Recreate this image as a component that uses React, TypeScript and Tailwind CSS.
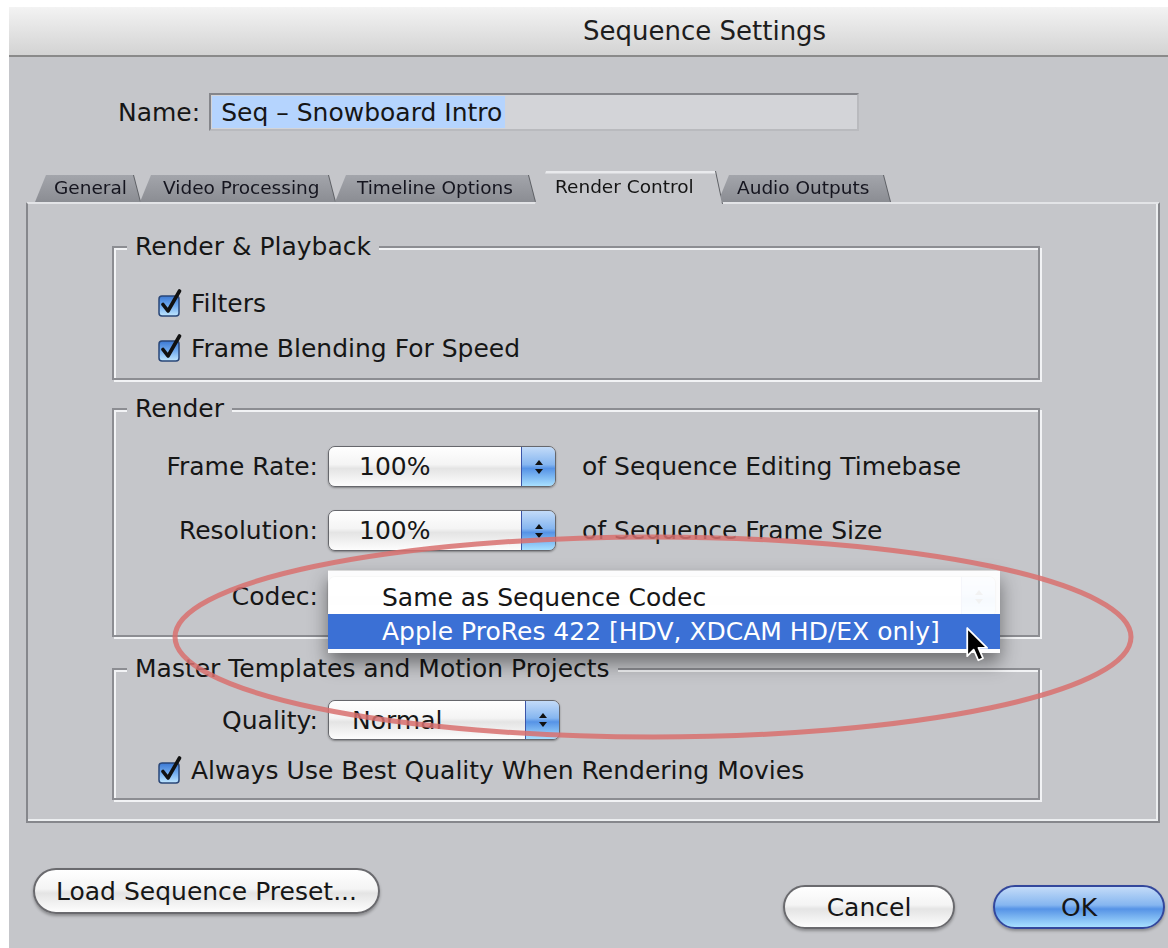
import clsx from 'clsx';
import type { ReactNode } from 'react';

const glossWhite =
  'bg-[linear-gradient(to_bottom,#ffffff_0%,#f4f4f4_45%,#e4e4e4_55%,#fdfdfd_100%)]';
const glossBlue =
  'bg-[linear-gradient(to_bottom,#c3dbf8_0%,#86b6f0_45%,#5693e6_55%,#a8e0ff_100%)]';

function CheckBox() {
  return (
    <svg width="26" height="28" viewBox="0 0 26 28" className="shrink-0">
      <defs>
        <linearGradient id="aquaCheck" x1="0" y1="0" x2="0" y2="1">
          <stop offset="0" stopColor="#3b78d3" />
          <stop offset="0.5" stopColor="#72acef" />
          <stop offset="1" stopColor="#c2e8ff" />
        </linearGradient>
      </defs>
      <rect x="1" y="7" width="20" height="20" rx="3" fill="url(#aquaCheck)" stroke="#2a4778" strokeWidth="1.5" />
      <path d="M5 15.5 L10 22 L21.5 2" fill="none" stroke="#111" strokeWidth="3.6" strokeLinecap="round" strokeLinejoin="round" />
    </svg>
  );
}

function CheckRow({ label, className }: { label: string; className?: string }) {
  return (
    <div className={clsx('flex h-[40px] items-center', className)}>
      <CheckBox />
      <span className="ml-[7px] text-[25px] leading-none">{label}</span>
    </div>
  );
}

function Arrows() {
  return (
    <svg width="10" height="20" viewBox="0 0 10 20">
      <path d="M5 3 L9 8 L1 8 Z" fill="#111" />
      <path d="M5 17 L9 12 L1 12 Z" fill="#111" />
    </svg>
  );
}

function Popup({
  value,
  className,
  pad = 'pl-[30px]',
}: {
  value?: string;
  className: string;
  pad?: string;
}) {
  return (
    <div
      className={clsx(
        'flex overflow-hidden rounded-[7px] border border-[#66676c] shadow-[0_1px_2px_rgba(0,0,0,0.35)]',
        className,
      )}
    >
      <div className={clsx('flex flex-1 items-center text-[25px] leading-none', glossWhite, pad)}>{value}</div>
      <div
        className={clsx(
          'flex w-[34px] items-center justify-center border-l border-[#3b55a8]',
          glossBlue,
        )}
      >
        <Arrows />
      </div>
    </div>
  );
}

function Group({
  title,
  className,
  children,
}: {
  title: string;
  className?: string;
  children: ReactNode;
}) {
  return (
    <div
      className={clsx(
        'relative w-[928px] border-2 border-[#8c8d92] shadow-[2px_2px_0_#f2f3f5,inset_2px_2px_0_#f2f3f5]',
        className,
      )}
    >
      <span className="absolute -top-[16px] left-[13px] bg-[#c5c6ca] px-[8px] text-[25px] leading-[30px]">
        {title}
      </span>
      {children}
    </div>
  );
}

function Tab({
  label,
  className,
  active = false,
}: {
  label: string;
  className: string;
  active?: boolean;
}) {
  return (
    <div
      className={clsx(
        'flex shrink-0 items-center text-[18.5px] leading-none [clip-path:polygon(11px_0,calc(100%_-_7px)_0,100%_100%,0_100%)]',
        active
          ? 'relative z-10 -mb-[2px] h-[33px] bg-[linear-gradient(to_bottom,#e9eaed_0,#e9eaed_2px,#c5c6ca_3px)] text-[#141414]'
          : 'h-[27px] bg-gradient-to-b from-[#a3a5ab] to-[#8b8d93] text-[#15151f]',
        className,
      )}
    >
      {label}
    </div>
  );
}

function AquaButton({
  children,
  className,
  blue = false,
}: {
  children: ReactNode;
  className: string;
  blue?: boolean;
}) {
  return (
    <div
      className={clsx(
        'flex shrink-0 items-center justify-center rounded-full border-2 text-[25px] leading-none shadow-[0_2px_3px_rgba(0,0,0,0.3)]',
        blue ? clsx('border-[#33479c]', glossBlue) : clsx('border-[#6a6a6e]', glossWhite),
        className,
      )}
    >
      {children}
    </div>
  );
}

export default function App() {
  return (
    <div className="relative h-[948px] w-[1168px] overflow-hidden bg-white font-['DejaVu_Sans',sans-serif] text-[#161616]">
      <div className="ml-[9px] mt-[7px] flex h-[941px] flex-col bg-[#c5c6ca]">
        {/* title bar */}
        <div className="flex h-[50px] shrink-0 items-center border-b-2 border-[#8a8a8a] bg-gradient-to-b from-[#f3f3f3] to-[#d3d3d3] pl-[574px] text-[26px] leading-none text-[#1d1d1d]">
          Sequence Settings
        </div>

        {/* sequence name */}
        <div className="mt-[36px] flex items-center">
          <span className="ml-[109px] text-[25px] leading-none">Name:</span>
          <div className="ml-[9px] flex h-[38px] w-[650px] items-center border-2 border-[#85868b] border-b-[#b9babe] border-r-[#b9babe] bg-[#d3d4d8] px-[1px]">
            <span className="flex h-[32px] items-center bg-[#b5d4fe] pl-[9px] pr-[3px] text-[25px] leading-none">
              Seq – Snowboard Intro
            </span>
          </div>
        </div>

        {/* tabs */}
        <div className="mt-[39px] flex h-[32px] items-end pl-[26px] [filter:drop-shadow(1px_0_0_#5e6065)]">
          <Tab label="General" className="w-[105px] pl-[19px]" />
          <Tab label="Video Processing" className="w-[195px] pl-[23px]" />
          <Tab label="Timeline Options" className="w-[200px] pl-[22px]" />
          <Tab label="Render Control" active className="w-[187px] pl-[20px]" />
          <Tab label="Audio Outputs" className="-ml-[4px] w-[172px] pl-[19px]" />
        </div>

        {/* tab panel */}
        <div className="ml-[17px] h-[621px] w-[1134px] border-2 border-[#86878c] border-t-[#e3e4e7] pl-[84px] pt-[42px] shadow-[inset_-2px_-2px_0_#eceef0]">
          <Group title="Render & Playback" className="h-[134px] pl-[44px] pt-[35px]">
            <CheckRow label="Filters" />
            <CheckRow label="Frame Blending For Speed" className="mt-[5px]" />
          </Group>

          <Group title="Render" className="mt-[28px] h-[229px] pt-[36px]">
            <div className="flex h-[41px] items-center">
              <span className="w-[204px] text-right text-[25px] leading-none">Frame Rate:</span>
              <Popup value="100%" className="ml-[10px] h-[41px] w-[228px]" />
              <span className="ml-[26px] text-[25px] leading-none">of Sequence Editing Timebase</span>
            </div>
            <div className="mt-[23px] flex h-[41px] items-center">
              <span className="w-[204px] text-right text-[25px] leading-none">Resolution:</span>
              <Popup value="100%" className="ml-[10px] h-[41px] w-[228px]" />
              <span className="ml-[26px] text-[25px] leading-none">of Sequence Frame Size</span>
            </div>
            <div className="mt-[25px] flex h-[41px] items-center">
              <span className="w-[204px] text-right text-[25px] leading-none">Codec:</span>
              {/* popup sits closed under the open menu */}
              <Popup className="ml-[10px] h-[41px] w-[668px]" />
            </div>
          </Group>

          <Group title="Master Templates and Motion Projects" className="mt-[31px] h-[132px] pt-[30px]">
            <div className="flex h-[40px] items-center">
              <span className="w-[204px] text-right text-[25px] leading-none">Quality:</span>
              <Popup value="Normal" pad="pl-[23px]" className="ml-[10px] h-[40px] w-[232px]" />
            </div>
            <CheckRow label="Always Use Best Quality When Rendering Movies" className="mt-[10px] pl-[44px]" />
          </Group>
        </div>

        {/* dialog buttons */}
        <div className="mt-[45px] flex items-start">
          <AquaButton className="ml-[24px] h-[46px] w-[347px]">Load Sequence Preset...</AquaButton>
          <AquaButton className="ml-[403px] mt-[17px] h-[44px] w-[172px]">Cancel</AquaButton>
          <AquaButton blue className="ml-[38px] mt-[17px] h-[44px] w-[172px]">
            OK
          </AquaButton>
        </div>
      </div>

      {/* open codec menu */}
      <div className="absolute left-[328px] top-[570px] w-[672px] border-t border-[#d9d9d9] bg-white/95 pb-[4px] pt-[10px] text-[25px] leading-none shadow-[0_10px_18px_rgba(0,0,0,0.45)]">
        <div className="flex h-[33px] items-center pl-[54px]">Same as Sequence Codec</div>
        <div className="flex h-[35px] items-center bg-[#3b70d5] pl-[54px] text-white">
          Apple ProRes 422 [HDV, XDCAM HD/EX only]
        </div>
      </div>

      {/* pointer */}
      <svg className="absolute left-[965px] top-[626px]" width="25" height="37" viewBox="0 0 18 27">
        <path
          d="M1.5 1.5 L1.5 22 L6.2 17.3 L9.6 25 L13 23.5 L9.7 16 L16 16 Z"
          fill="#000"
          stroke="#fff"
          strokeWidth="1.3"
          strokeLinejoin="round"
        />
      </svg>

      {/* red ring drawn around the codec choice */}
      <svg className="pointer-events-none absolute left-0 top-0" width="1168" height="948">
        <ellipse cx="653" cy="637" rx="478" ry="100" fill="none" stroke="#d8706f" strokeOpacity="0.85" strokeWidth="5" />
      </svg>
    </div>
  );
}
